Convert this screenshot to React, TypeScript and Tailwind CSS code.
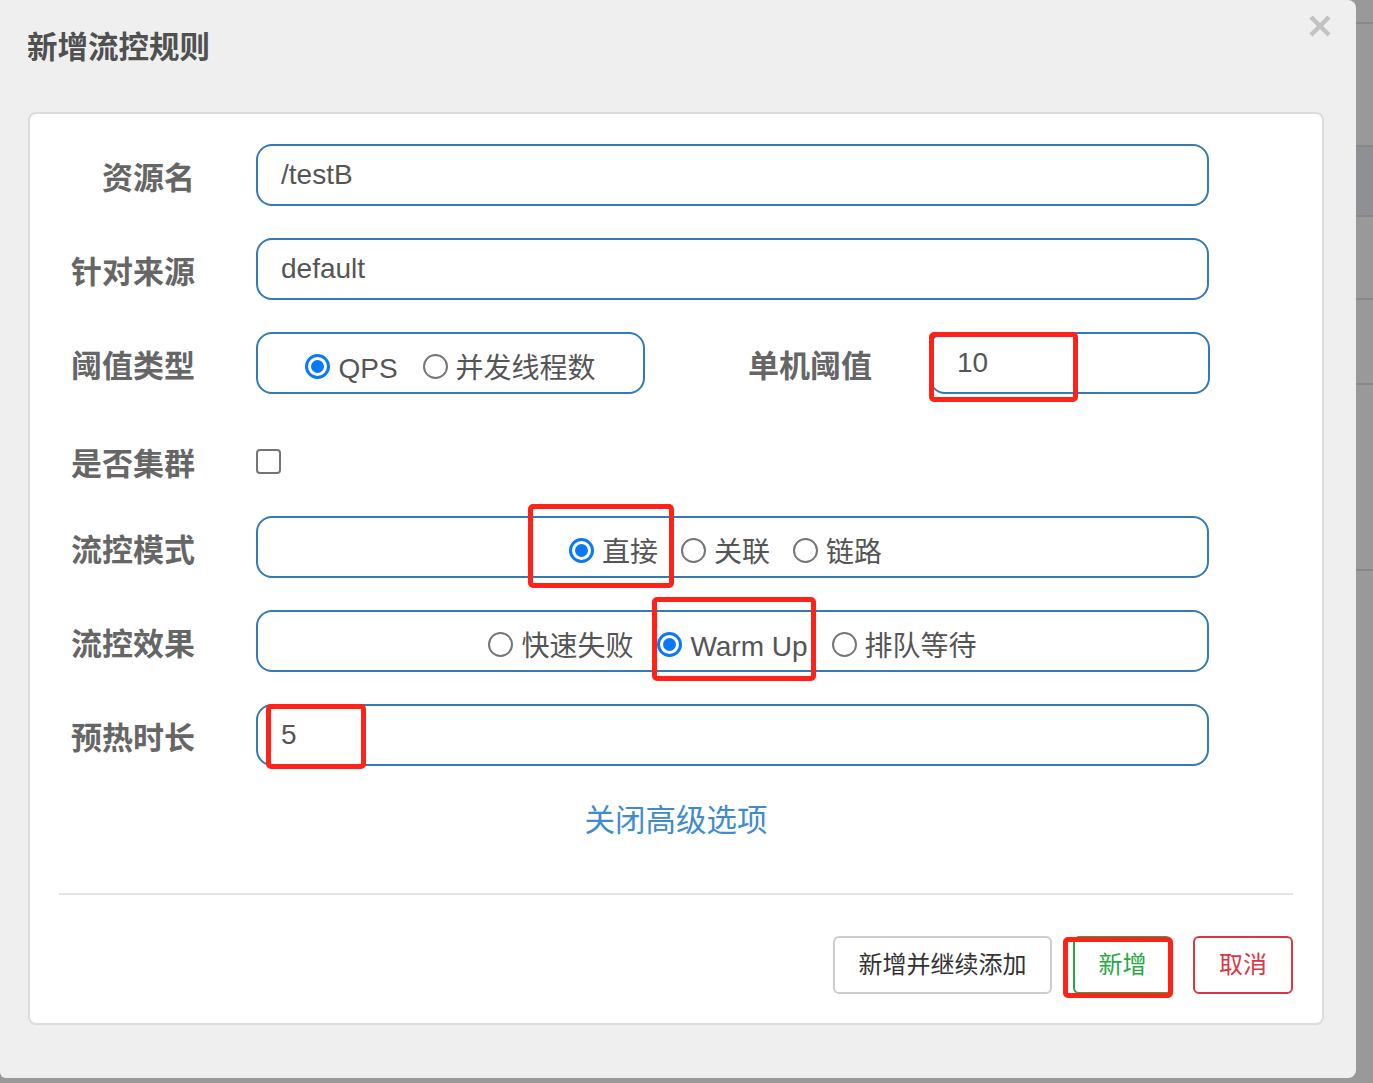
import type { ReactNode } from 'react';

const font = 'font-["Liberation_Sans","Noto_Sans_CJK_SC",sans-serif]';

function Radio({ checked, label }: { checked?: boolean; label: string }) {
  return (
    <span className="flex items-center gap-[8px]">
      {checked ? (
        <span className="flex h-[25px] w-[25px] items-center justify-center rounded-full border-[3px] border-[#0b78f5] bg-white">
          <span className="h-[13px] w-[13px] rounded-full bg-[#0b78f5]" />
        </span>
      ) : (
        <span className="h-[25px] w-[25px] rounded-full border-2 border-[#767676] bg-white" />
      )}
      <span className="mt-[5px] leading-none">{label}</span>
    </span>
  );
}

// red annotation box drawn over the screenshot
function Mark({ className }: { className: string }) {
  return <span className={`pointer-events-none absolute rounded-[5px] border-[5px] border-[#ff2218] ${className}`} />;
}

function Row({ label, children, className = '' }: { label: string; children: ReactNode; className?: string }) {
  return (
    <div className={`flex items-center ${className}`}>
      <div className="mt-[6px] w-[165px] text-right text-[31px] font-bold leading-none text-[#666]">{label}</div>
      <div className="ml-[61px] flex items-center">{children}</div>
    </div>
  );
}

const box = 'relative flex h-[62px] items-center rounded-[16px] border-2 border-[#337ab7] bg-white text-[28px] text-[#555]';

export default function App() {
  return (
    <div className={`relative flex h-[1083px] w-[1373px] items-start overflow-hidden bg-[#999] ${font}`}>
      {/* dialog */}
      <div className="relative h-[1078px] w-[1356px] rounded-bl-[6px] rounded-r-[8px] bg-[#efefef]">
        <div className="h-[112px] pl-[27px] pt-[32px] text-[30.5px] font-bold leading-[30px] text-[#505050]">新增流控规则</div>
        <button className="absolute right-[25px] top-[15px]">
          <svg width="22" height="22" viewBox="0 0 22 22">
            <path d="M2 2L20 20M20 2L2 20" stroke="#c2c2c2" strokeWidth="4.5" />
          </svg>
        </button>

        <div className="ml-[28px] h-[913px] w-[1296px] rounded-[8px] border-2 border-[#dcdcdc] bg-white pt-[30px]">
          <Row label="资源名">
            <div className={`${box} w-[953px] pl-[23px]`}>/testB</div>
          </Row>
          <Row label="针对来源" className="mt-[32px]">
            <div className={`${box} w-[953px] pl-[23px]`}>default</div>
          </Row>
          <Row label="阈值类型" className="mt-[32px]">
            <div className={`${box} w-[389px] justify-center gap-[25px] pt-[6px]`}>
              <Radio checked label="QPS" />
              <Radio label="并发线程数" />
            </div>
            <div className="ml-[103px] mt-[6px] text-[31px] font-bold leading-none text-[#666]">单机阈值</div>
            <div className={`${box} ml-[57px] w-[281px] pl-[26px]`}>
              10
              <Mark className="-left-[2px] -top-[2px] h-[70px] w-[149px]" />
            </div>
          </Row>
          <Row label="是否集群" className="h-[122px] pt-[12px]">
            <span className="h-[25px] w-[25px] rounded-[4px] border-2 border-[#757575] bg-white" />
          </Row>
          <Row label="流控模式">
            <div className={`${box} w-[953px] justify-center gap-[23px] pr-[14px] pt-[6px]`}>
              <Radio checked label="直接" />
              <Radio label="关联" />
              <Radio label="链路" />
              <Mark className="left-[270px] -top-[14px] h-[84px] w-[146px]" />
            </div>
          </Row>
          <Row label="流控效果" className="mt-[32px]">
            <div className={`${box} w-[953px] justify-center gap-[24px] pt-[6px]`}>
              <Radio label="快速失败" />
              <Radio checked label="Warm Up" />
              <Radio label="排队等待" />
              <Mark className="left-[394px] -top-[15px] h-[84px] w-[164px]" />
            </div>
          </Row>
          <Row label="预热时长" className="mt-[32px]">
            <div className={`${box} w-[953px] pl-[23px]`}>
              5
              <Mark className="left-[8px] -top-[2px] h-[65px] w-[100px]" />
            </div>
          </Row>

          <div className="mt-[34px] h-[40px] text-center text-[30.5px] leading-[40px] text-[#3f8bcb]">关闭高级选项</div>

          <div className="mx-[29px] mt-[53px] h-[2px] bg-[#e5e5e5]" />

          <div className="mt-[41px] flex justify-end gap-[21px] pr-[29px] text-[24px]">
            <button className="h-[58px] w-[219px] rounded-[6px] border-2 border-[#cccccc] bg-white text-[#333]">新增并继续添加</button>
            <button className="relative h-[58px] w-[99px] rounded-[6px] border-2 border-[#28a745] bg-white text-[#28a745]">
              新增
              <Mark className="-left-[12px] -top-[1px] h-[61px] w-[110px]" />
            </button>
            <button className="h-[58px] w-[100px] rounded-[6px] border-2 border-[#dc3545] bg-white text-[#dc3545]">取消</button>
          </div>
        </div>
      </div>

      {/* page behind the dialog */}
      <div className="flex h-full w-[17px] flex-col bg-[#999]">
        <div className="h-[22px]" />
        <div className="h-[123px] border-t-2 border-[#888]" />
        <div className="h-[70px] border-t-2 border-[#888] bg-[#8f9093]" />
        <div className="h-[83px] border-t-2 border-[#888]" />
        <div className="h-[85px] border-t-2 border-[#888]" />
        <div className="h-[186px] border-t-2 border-[#888]" />
        <div className="flex-1 border-t-2 border-[#888]" />
      </div>
    </div>
  );
}
